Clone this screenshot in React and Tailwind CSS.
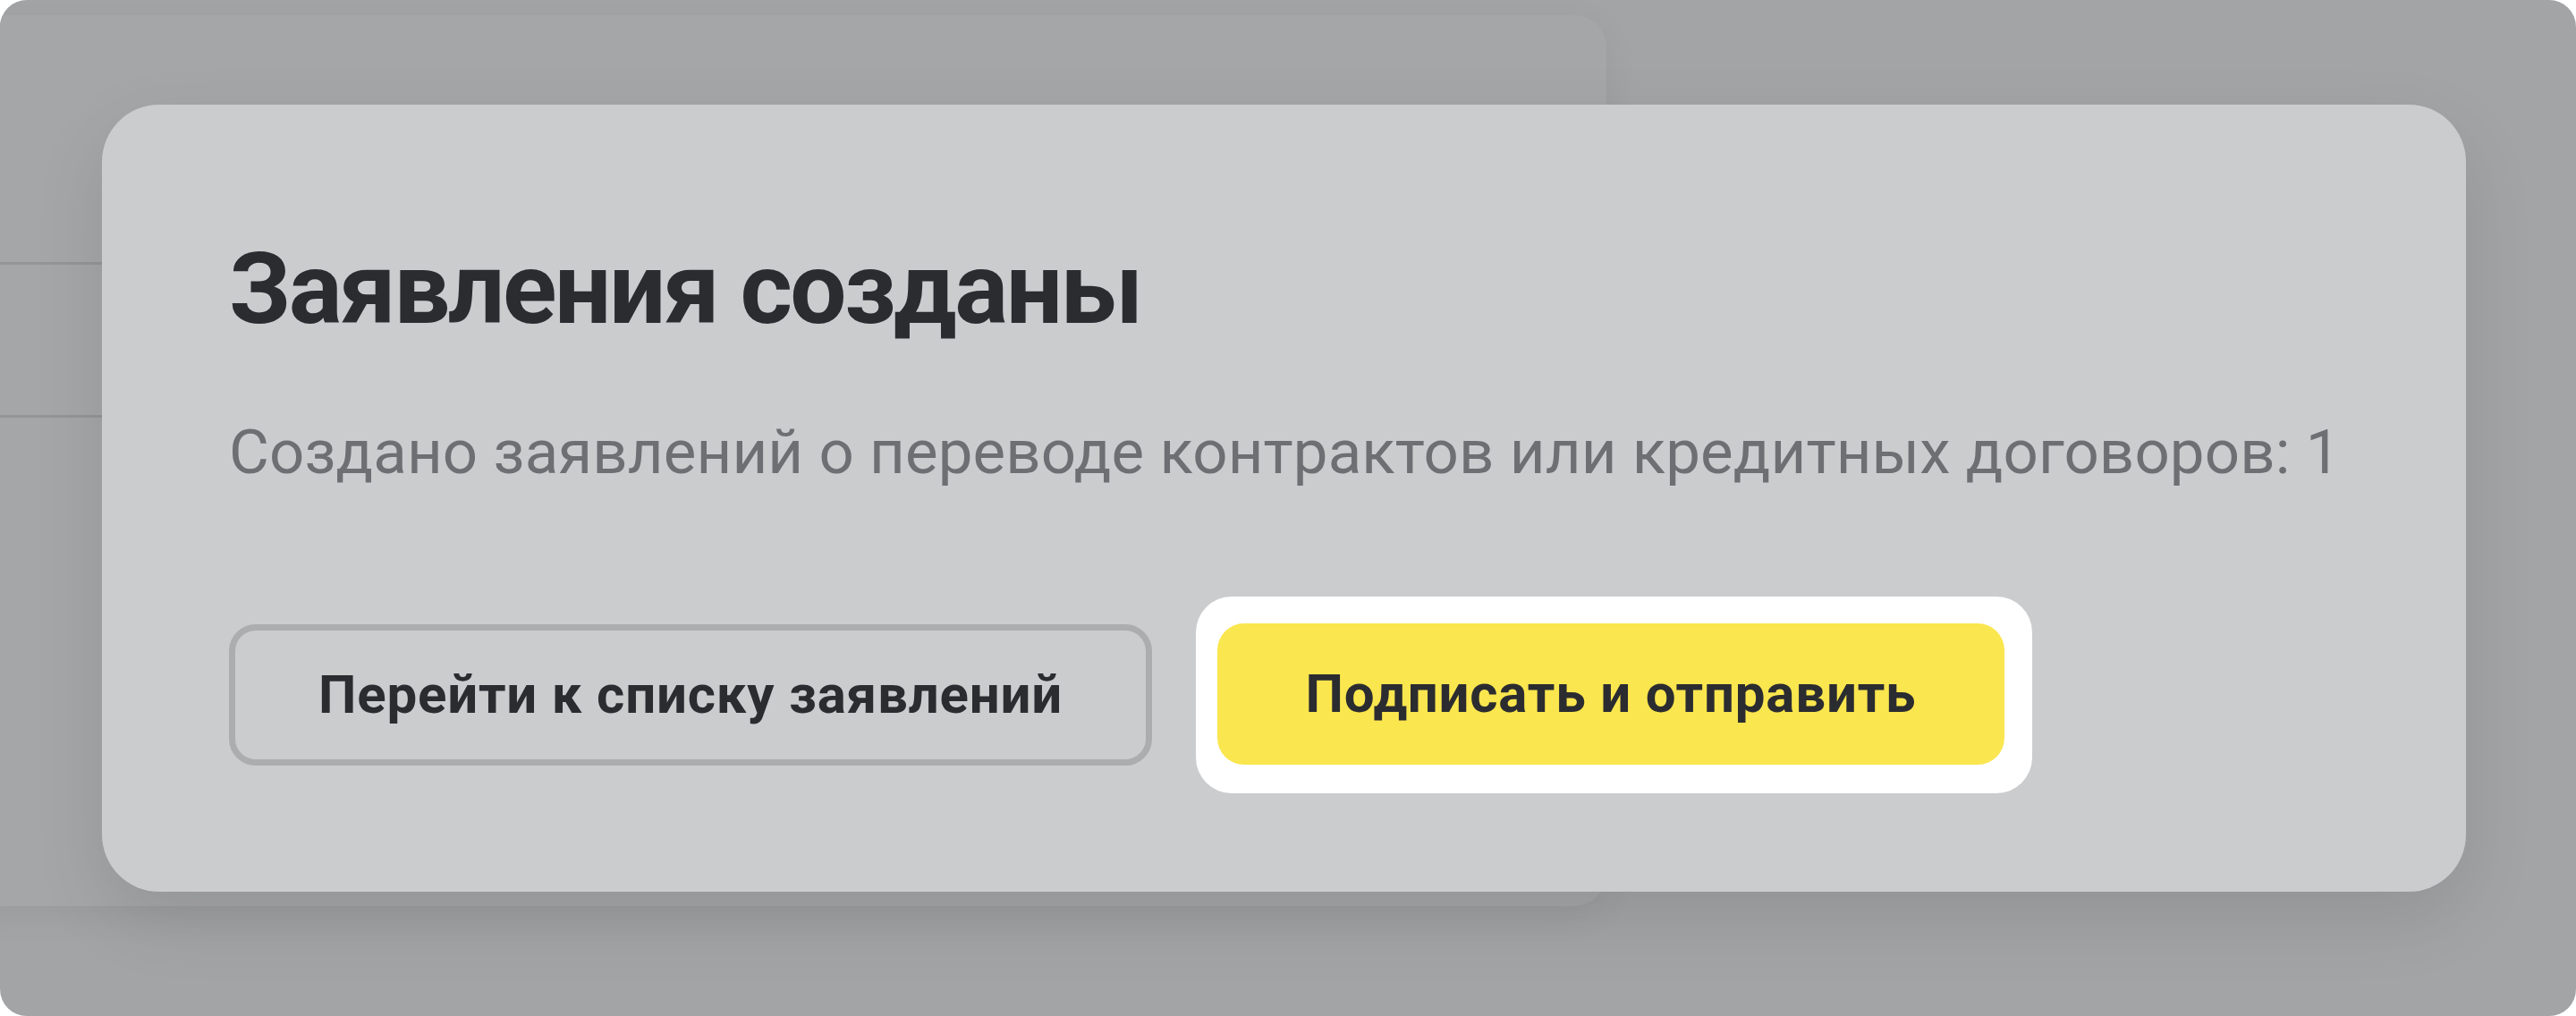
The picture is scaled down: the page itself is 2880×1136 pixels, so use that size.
import React from "react";

const font = { fontFamily: "Roboto, 'Liberation Sans', Arial, sans-serif" };

const BackgroundPage = () => (
  <div className="absolute left-[-40px] top-[17px] h-[996px] w-[1836px] rounded-[36px] bg-[#a5a6a8] shadow-[0_10px_40px_rgba(0,0,0,0.06)]">
    <div className="mt-[276px] h-[3px] bg-[#949597]" />
    <div className="mt-[168px] h-[3px] bg-[#949597]" />
  </div>
);

const App = () => {
  return (
    <div className="min-h-[1136px] w-[2880px] bg-white" style={font}>
      <div className="relative h-[1136px] w-[2880px] overflow-hidden rounded-[30px] bg-[#a3a4a6]">
        <BackgroundPage />
        <div className="relative flex pl-[114px] pt-[117px]">
          <div className="flex h-[880px] w-[2643px] flex-col rounded-[64px] bg-[#cbccce] px-[142px] pt-[150px] shadow-[0_30px_80px_rgba(0,0,0,0.10)]">
            <h1 className="text-[112px] font-bold leading-[1] tracking-[-2.5px] text-[#2b2c30]">
              Заявления созданы
            </h1>
            <p className="mt-[92px] whitespace-nowrap text-[69px] leading-[1] tracking-[0.1px] text-[#6e6f73]">
              Создано заявлений о переводе контрактов или кредитных договоров: 1
            </p>
            <div className="mt-[158px] flex items-center">
              <button className="flex h-[158px] w-[1032px] items-center justify-center rounded-[30px] border-[7px] border-[#acadaf] text-[60px] font-bold tracking-[0.8px] text-[#2b2c30]">
                Перейти к списку заявлений
              </button>
              <div className="ml-[49px] -my-[31px] rounded-[40px] bg-white pb-[32px] pl-[24px] pr-[31px] pt-[30px]">
                <button className="flex h-[158px] w-[880px] items-center justify-center rounded-[30px] bg-[#fae64e] text-[60px] font-bold tracking-[0.8px] text-[#2b2c30]">
                  Подписать и отправить
                </button>
              </div>
            </div>
          </div>
        </div>
      </div>
    </div>
  );
};

export default App;
